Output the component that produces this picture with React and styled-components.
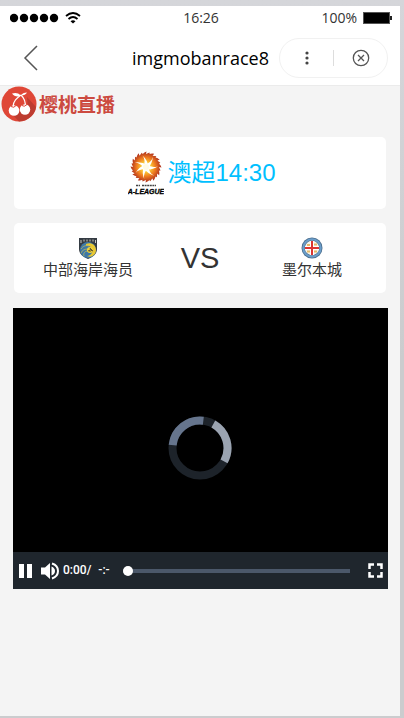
import React from "react";
import styled, { createGlobalStyle } from "styled-components";

const GlobalStyle = createGlobalStyle`
  * { box-sizing: border-box; }
  body {
    margin: 0;
    background: #cfd0d3;
    font-family: "Liberation Sans", "Noto Sans CJK SC", sans-serif;
    color: #333;
  }
  button { border: 0; padding: 0; background: none; color: inherit; cursor: pointer; }
  svg { display: block; }
`;

const Page = styled.div`
  min-height: 100vh;
  padding: 6px 4px 2px 0;
  display: flex;
  background: linear-gradient(#d5d6da, #cbccce 50%, #cbccce);
`;

const Phone = styled.div`
  flex: 1;
  min-width: 0;
  display: flex;
  flex-direction: column;
  background: #f4f4f4;
`;

const StatusBar = styled.div`
  display: grid;
  grid-template-columns: 1fr auto 1fr;
  align-items: center;
  height: 24px;
  padding: 0 8px 0 10px;
  background: #fff;
  font: 14px/24px "Open Sans", sans-serif;
`;

const StatusGroup = styled.div`
  display: flex;
  align-items: center;
  gap: 6px;
  justify-content: ${(p) => (p.$end ? "flex-end" : "flex-start")};
`;

const NavBar = styled.header`
  display: flex;
  align-items: center;
  height: 56px;
  padding: 0 12px 0 20px;
  background: #fff;
  border-bottom: 1px solid #ebebeb;
`;

const BackButton = styled.button`
  width: 22px;
  height: 28px;
  display: grid;
  place-items: center;
`;

const Title = styled.h1`
  flex: 1;
  margin: 0;
  padding-right: 10px;
  text-align: right;
  white-space: nowrap;
  color: #000;
  font: 400 18px/26px "Open Sans", sans-serif;
`;

const Capsule = styled.div`
  display: flex;
  align-items: center;
  width: 109px;
  height: 40px;
  border: 1px solid #f1f1f1;
  border-radius: 20px;
`;

const CapsuleButton = styled.button`
  flex: 1;
  height: 100%;
  display: grid;
  place-items: center;
`;

const Divider = styled.span`
  width: 1px;
  height: 16px;
  background: #ddd;
`;

const Brand = styled.a`
  display: flex;
  align-items: center;
  gap: 2px;
  height: 36px;
  color: #cc4a40;
  font: 700 19px/36px "Noto Sans CJK SC", sans-serif;
  text-decoration: none;
`;

const Main = styled.main`
  display: flex;
  flex-direction: column;
  gap: 14px;
  padding: 15px 14px 0;
`;

const LeagueCard = styled.section`
  display: flex;
  align-items: center;
  justify-content: center;
  gap: 3px;
  height: 72px;
  padding-left: 4px;
  border-radius: 5px;
  background: #fff;
  color: #00bfff;
  font-size: 24px;
  line-height: 36px;
`;

const MatchCard = styled.section`
  display: grid;
  grid-template-columns: repeat(3, 1fr);
  align-items: center;
  height: 70px;
  padding: 0 18px;
  border-radius: 5px;
  background: #fff;
`;

const Team = styled.div`
  display: flex;
  flex-direction: column;
  align-items: center;
  gap: 1px;
  white-space: nowrap;
  font-size: 15px;
  line-height: 20px;
`;

const Versus = styled.div`
  text-align: center;
  font-size: 29px;
  line-height: 36px;
`;

const Player = styled.section`
  margin: 1px -2px 0 -1px;
  background: #000;
`;

const Screen = styled.div`
  display: grid;
  place-items: center;
  height: 244px;
  padding: 36px 2px 0 0;
`;

const Controls = styled.div`
  display: flex;
  align-items: center;
  height: 37px;
  padding: 0 5px 0 6px;
  background: #1f262d;
  color: #fff;
`;

const ControlButton = styled.button`
  display: grid;
  place-items: center;
  height: 24px;
`;

const Time = styled.div`
  display: flex;
  gap: 7px;
  margin-left: 3px;
  padding-bottom: 2px;
  font: 500 12px/20px Roboto, sans-serif;
`;

const Seek = styled.input`
  appearance: none;
  flex: 1;
  min-width: 0;
  height: 10px;
  margin: 0 18px 0 13px;
  background: linear-gradient(#4b586a, #4b586a) center / 100% 4px no-repeat;

  &::-webkit-slider-thumb {
    appearance: none;
    width: 10px;
    height: 10px;
    border-radius: 50%;
    background: #fff;
  }
`;

const rays = Array.from({ length: 12 }, (_, i) => i * 30);
const arms = Array.from({ length: 7 }, (_, i) => i * (360 / 7));

function CherryLogo() {
  return (
    <svg width="37" height="36" viewBox="0 0 37 36" aria-hidden="true">
      <circle cx="19" cy="18" r="17.5" fill="#df4737" />
      <path d="m27 11 9 10C35 29 28 35 19 35.5L12 28 28 24Z" fill="#bd3c30" />
      <path d="M21 9C17 12 13 15 13 21M21 9c4 4 5 7 4 12" fill="none" stroke="#fff" strokeWidth="1.2" />
      <path d="M21 9.500c-3-3-6-3-9-2 2 3 6 4 9 2Zm0 0c1-2 3-3 6-3-1 2-3 3-6 3Z" fill="#fff" />
      <circle cx="14" cy="24.500" r="5.3" fill="#fff" />
      <circle cx="25" cy="23.500" r="5.2" fill="#fff" />
      <path d="M11 20.500q3 2 5-1M22 19.500q2 2 5-1" fill="none" stroke="#df4737" />
    </svg>
  );
}

function LeagueLogo() {
  return (
    <svg width="36" height="44" viewBox="0 0 36 44" role="img" aria-label="A-League">
      <defs>
        <radialGradient id="flame" gradientUnits="userSpaceOnUse" cx="18" cy="16" r="16">
          <stop offset=".2" stopColor="#ffe23c" />
          <stop offset=".6" stopColor="#ee7a20" />
          <stop offset="1" stopColor="#a3241c" />
        </radialGradient>
      </defs>
      <circle cx="18" cy="16" r="13" fill="url(#flame)" />
      {rays.map((a) => (
        <path
          key={a}
          d="M13.500 6Q14 2 18.500 .5L18 3 21.500 1.500 22 6Z"
          transform={`rotate(${a} 18 16)`}
          fill="url(#flame)"
        />
      ))}
      {arms.map((a) => (
        <path
          key={a}
          d="M15.500 16Q18 9 14.500 4.500Q19.500 9 20.500 16Z"
          transform={`rotate(${a} 18 16)`}
          fill="#fff"
        />
      ))}
      <circle cx="18" cy="16" r="3" fill="#fffbe6" />
      <path d="M8 34.500h4M14 34.500h14" stroke="#444" strokeWidth="1.5" strokeDasharray="2 .6" />
      <text x="18" y="43" textAnchor="middle" fontFamily="Liberation Sans, sans-serif" fontSize="7" fontWeight="700" fontStyle="italic" fill="#000" stroke="#000" strokeWidth=".3">
        A-LEAGUE
      </text>
    </svg>
  );
}

function MarinersCrest() {
  return (
    <svg width="20" height="22" viewBox="0 0 20 22" aria-hidden="true">
      <path d="M1 1h18v11c0 5-4 8-9 10-5-2-9-5-9-10Z" fill="#343b43" />
      <path d="M3 3v3M6 2.500v2M9 2.500v2M12 2.500v2M15 2.500v2M17.500 3v3" stroke="#c8c8c0" strokeWidth="1" />
      <circle cx="10" cy="13" r="8" fill="#3e78a6" />
      <path d="M8 7c5-2 10 1 10 6s-5 8-9 6c5-1 6-4 5-7s-4-4-6-3" fill="#e9c832" />
      <path d="M3 12c2-3 5-4 8-3M3 16c1-3 4-4 7-4M6 19c-1-3 1-5 4-5" fill="none" stroke="#b9b860" strokeWidth=".8" />
      <circle cx="12" cy="13" r="3" fill="#f2d43a" />
      <path d="m12 11 1 2 2 1M12 13l-2 1M12 15v-2" stroke="#333" strokeWidth=".8" />
    </svg>
  );
}

function CityCrest() {
  return (
    <svg width="22" height="22" viewBox="0 0 22 22" aria-hidden="true">
      <circle cx="11" cy="11" r="10.5" fill="#4d6f8e" />
      <circle cx="11" cy="11" r="8.700" fill="none" stroke="#6a9dca" strokeWidth="2" />
      <circle cx="11" cy="11" r="7.2" fill="#f8f5eb" />
      <path d="M6 8h3M13 7.500h3M6 14.500h3M13 14.500h3" stroke="#e5b968" strokeWidth="2" />
      <path d="M11 4v14M4 11h14" stroke="#fff" strokeWidth="4" />
      <path d="M11 4v14M4 11h14" stroke="#dc3431" strokeWidth="2" />
    </svg>
  );
}

function Spinner() {
  const ring = { cx: 32, cy: 32, r: 27.5, fill: "none", strokeWidth: 8, pathLength: 360 };
  return (
    <svg width="64" height="64" viewBox="0 0 64 64" role="img" aria-label="Loading">
      <circle {...ring} stroke="#1d232a" />
      <circle {...ring} stroke="#9ba4b1" strokeDasharray="90 270" transform="rotate(-61 32 32)" />
      <circle {...ring} stroke="#66758d" strokeDasharray="91 269" transform="rotate(-174 32 32)" />
    </svg>
  );
}

export default function App() {
  return (
    <>
      <GlobalStyle />
      <Page>
        <Phone>
          <StatusBar>
            <StatusGroup>
              <svg width="49" height="10" viewBox="0 0 49 10" aria-hidden="true">
                {[4, 14, 24, 34, 44].map((x) => (
                  <circle key={x} cx={x} cy="5" r="4.2" fill="#000" />
                ))}
              </svg>
              <svg width="16" height="12" viewBox="0 0 16 12" fill="none" stroke="#000" strokeWidth="1.8" aria-hidden="true">
                <path d="M1 4q7-6 14 0M3.5 7q4.500-4 9 0" />
                <path d="M5.500 9.300q2.500-2 5 0L8 11.500Z" fill="#000" stroke="none" />
              </svg>
            </StatusGroup>
            <span>16:26</span>
            <StatusGroup $end>
              <span>100%</span>
              <svg width="29" height="12" viewBox="0 0 29 12" aria-hidden="true">
                <rect x=".5" y=".5" width="26" height="11" fill="#000" stroke="#555" />
                <rect x="27" y="4" width="2" height="4" fill="#222" />
              </svg>
            </StatusGroup>
          </StatusBar>
          <NavBar>
            <BackButton aria-label="Back">
              <svg width="16" height="26" viewBox="0 0 16 26" fill="none" stroke="#555" strokeWidth="1.5">
                <path d="M14 1 2 13l12 12" />
              </svg>
            </BackButton>
            <Title>imgmobanrace8</Title>
            <Capsule>
              <CapsuleButton aria-label="More">
                <svg width="4" height="14" viewBox="0 0 4 14" fill="#444">
                  <circle cx="2" cy="2" r="1.600" />
                  <circle cx="2" cy="7" r="1.600" />
                  <circle cx="2" cy="12" r="1.600" />
                </svg>
              </CapsuleButton>
              <Divider />
              <CapsuleButton aria-label="Close">
                <svg width="18" height="18" viewBox="0 0 18 18" fill="none" stroke="#555" strokeWidth="1.300">
                  <circle cx="9" cy="9" r="7.700" />
                  <path d="m6 6 6 6M12 6l-6 6" />
                </svg>
              </CapsuleButton>
            </Capsule>
          </NavBar>
          <Brand href="#">
            <CherryLogo />
            樱桃直播
          </Brand>
          <Main>
            <LeagueCard>
              <LeagueLogo />
              <span>澳超14:30</span>
            </LeagueCard>
            <MatchCard>
              <Team>
                <MarinersCrest />
                中部海岸海员
              </Team>
              <Versus>VS</Versus>
              <Team>
                <CityCrest />
                墨尔本城
              </Team>
            </MatchCard>
            <Player aria-label="Video player">
              <Screen>
                <Spinner />
              </Screen>
              <Controls>
                <ControlButton aria-label="Pause">
                  <svg width="13" height="14" viewBox="0 0 13 14" fill="currentColor">
                    <path d="M0 0h5v14H0zM8 0h5v14H8z" />
                  </svg>
                </ControlButton>
                <ControlButton aria-label="Mute">
                  <svg width="28" height="18" viewBox="0 0 28 18" fill="currentColor">
                    <path d="M9 5.500h4L18 1v16l-5-4.500H9z" />
                    <path d="M19.500 4.500Q23 6 23 9t-3.500 4.500z" />
                    <path d="M20 1.500Q26 3.500 26 9t-6 7.500" fill="none" stroke="currentColor" strokeWidth="2" />
                  </svg>
                </ControlButton>
                <Time>
                  <span>0:00/</span>
                  <span>-:-</span>
                </Time>
                <Seek type="range" min="0" max="100" defaultValue="0" aria-label="Seek" />
                <ControlButton aria-label="Fullscreen">
                  <svg width="15" height="15" viewBox="0 0 15 15" fill="none" stroke="currentColor" strokeWidth="2.500">
                    <path d="M1.500 6V1.500H6M9 1.500h4.500V6M13.500 9v4.500H9M6 13.500H1.500V9" />
                  </svg>
                </ControlButton>
              </Controls>
            </Player>
          </Main>
        </Phone>
      </Page>
    </>
  );
}
